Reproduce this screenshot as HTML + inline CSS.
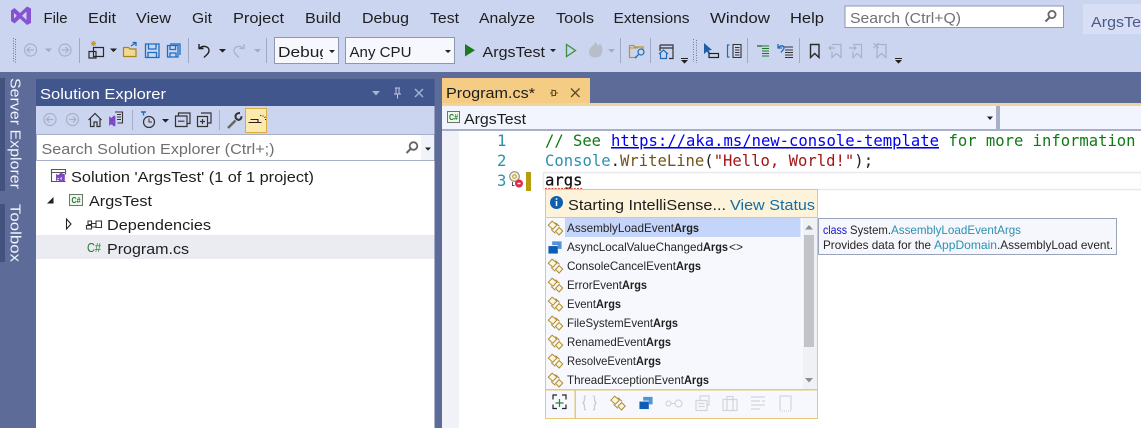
<!DOCTYPE html>
<html><head><meta charset="utf-8"><style>
html,body{margin:0;padding:0;width:1141px;height:428px;overflow:hidden;background:#5d6b99}
svg{display:block}
text{font-family:"Liberation Sans",sans-serif;font-size:15px;fill:#1e1e1e;white-space:pre}
.c text,text.c{font-family:"DejaVu Sans Mono","Liberation Mono",monospace;font-size:15.6px}
.l text{font-size:12px;fill:#252525}
.l text.b{font-weight:bold;fill:#1e1e1e}
.ic{fill:none;stroke-width:1.2}
</style></head><body>
<svg xmlns="http://www.w3.org/2000/svg" width="1141" height="428" viewBox="0 0 1141 428">
<defs>
<symbol id="ev" viewBox="0 0 16 16" overflow="visible"><g fill="#fbf5df" stroke="#b08a2c" stroke-width="1"><path d="M.8 5.200 4.600 1.200 9.400 5 5.400 9.200Z"/><path d="M8 11.400 11.600 7.600 15.200 11 11.600 15Z"/><path d="M8 2.600 12 6.400M3.600 9.400 7.800 13.400" fill="none"/></g></symbol>
<symbol id="st" viewBox="0 0 16 16" overflow="visible"><path d="M5 2h10v8H11V6H5Z" fill="#4f93d8"/><path d="M1 7h10v8H1Z" fill="#0e5cb4"/></symbol>
<symbol id="drop" viewBox="0 0 7 4" overflow="visible"><path d="M0 0h7L3.500 3.600Z"/></symbol>
</defs>

<!-- header -->
<rect width="1141" height="72" fill="#ccd5f0"/>
<path d="M11 10.500 14.500 8 20 13 27 6.500 31 8.500V23L27 25 20 18.500 14.500 23.500 11 21Z" fill="#8654d2"/><path d="M14 13v5.500L16.800 15.800ZM26.500 11.500v8.500L22 15.800Z" fill="#ccd5f0"/>
<text x="43.500" y="23" textLength="24" lengthAdjust="spacingAndGlyphs">File</text>
<text x="88" y="23" textLength="28" lengthAdjust="spacingAndGlyphs">Edit</text>
<text x="136" y="23" textLength="35" lengthAdjust="spacingAndGlyphs">View</text>
<text x="192" y="23" textLength="20" lengthAdjust="spacingAndGlyphs">Git</text>
<text x="233" y="23" textLength="51" lengthAdjust="spacingAndGlyphs">Project</text>
<text x="305" y="23" textLength="36" lengthAdjust="spacingAndGlyphs">Build</text>
<text x="362" y="23" textLength="47" lengthAdjust="spacingAndGlyphs">Debug</text>
<text x="430" y="23" textLength="29" lengthAdjust="spacingAndGlyphs">Test</text>
<text x="479" y="23" textLength="56" lengthAdjust="spacingAndGlyphs">Analyze</text>
<text x="556" y="23" textLength="38" lengthAdjust="spacingAndGlyphs">Tools</text>
<text x="613.500" y="23" textLength="76" lengthAdjust="spacingAndGlyphs">Extensions</text>
<text x="710" y="23" textLength="60" lengthAdjust="spacingAndGlyphs">Window</text>
<text x="790" y="23" textLength="34" lengthAdjust="spacingAndGlyphs">Help</text>
<rect x="845" y="6" width="218.500" height="21.500" fill="#fff" stroke="#8e96b0"/>
<text x="850" y="23" textLength="111" lengthAdjust="spacingAndGlyphs" style="fill:#717171">Search (Ctrl+Q)</text>
<circle cx="1052" cy="14.500" r="3.600" fill="none" stroke="#666" stroke-width="1.800"/><path d="M1049.500 17.500 1045.500 21.500" stroke="#666" stroke-width="2"/>
<rect x="1083" y="4" width="58" height="30" fill="#d8dff4"/>
<text x="1091" y="27" textLength="50" lengthAdjust="spacingAndGlyphs" style="fill:#4a5a8a">ArgsTe</text>

<!-- main toolbar -->
<path d="M13.500 38v24M15.500 39v24" stroke="#6f7791" stroke-width="1" stroke-dasharray="1 1.500"/>
<g class="ic" stroke="#a9b0c4"><circle cx="30.500" cy="50" r="6"/><path d="M34 50h-6.500M30 47l-3 3 3 3"/><circle cx="65" cy="50" r="6"/><path d="M61.500 50H68M65.500 47l3 3-3 3"/></g>
<use href="#drop" x="45" y="48.500" width="7" height="4" fill="#a4abc0"/>
<path d="M79.500 38v25M188.500 38v25M266.500 38v25M620.500 38v25M650.500 38v25M747.500 38v25M799.500 38v25" stroke="#9fa8c4"/>
<!-- new project -->
<path d="M91 43.500h5M93.500 41v5M91.500 41.500l4 4M95.500 41.500l-4 4" stroke="#c39a30"/>
<path d="M93.500 47.500h10v9h-10ZM89 51.500h7v6.500h-7Z" fill="none" stroke="#2a2a2a" stroke-width="1.200"/>
<use href="#drop" x="110" y="48.500" width="7" height="4" fill="#222"/>
<!-- open folder -->
<path d="M123.500 47.500h5l1.500 1.500h6v7.500h-12.500Z" fill="#f1d98f" stroke="#a8841e" stroke-width="1.200"/><path d="M131 46l4.500-3M132.500 42.500h3.500v3.500" fill="none" stroke="#1f6cb8" stroke-width="1.300"/>
<!-- save -->
<g fill="none" stroke="#1b6ec2" stroke-width="1.300"><path d="M145.500 44h13.500v13.500h-13.500ZM148.500 44v5h7.500v-5M148 57.500V52.500h8.500v5"/><path d="M167.500 45.500h10.500v11.500h-10.500ZM170 45.500v4h5.500v-4M170 57v-4h6v4M170 44h10v11"/></g>
<!-- undo redo -->
<path d="M199 44v4.500h4.500M199.500 48.500c3-3.500 10-2.500 9.500 2.500-.3 3-3 4-5 6.500" fill="none" stroke="#222" stroke-width="1.400"/>
<use href="#drop" x="219" y="49" width="7" height="4" fill="#222"/>
<path d="M244 44v4.500h-4.500M243.500 48.500c-3-3.500-10-2.500-9.500 2.500.3 3 3 4 5 6.500" fill="none" stroke="#aab1c6" stroke-width="1.300"/>
<use href="#drop" x="254" y="49" width="7" height="4" fill="#a4abc0"/>
<!-- combos -->
<rect x="274.500" y="37.500" width="64" height="26" fill="#f7f8fd" stroke="#8e96b0"/>
<clipPath id="dc"><rect x="274" y="37" width="49" height="22"/></clipPath>
<text x="278" y="57" textLength="51" lengthAdjust="spacingAndGlyphs" clip-path="url(#dc)">Debug</text>
<use href="#drop" x="329" y="50" width="6" height="3.500" fill="#222"/>
<rect x="345.500" y="37.500" width="109" height="26" fill="#f7f8fd" stroke="#8e96b0"/>
<text x="349.500" y="57" textLength="62" lengthAdjust="spacingAndGlyphs">Any CPU</text>
<use href="#drop" x="445" y="50" width="6" height="3.500" fill="#222"/>
<path d="M465 44v12.500l10-6.250Z" fill="#197a1e"/>
<text x="482.500" y="57" textLength="62.500" lengthAdjust="spacingAndGlyphs">ArgsTest</text>
<use href="#drop" x="550" y="49" width="6" height="3.500" fill="#222"/>
<path d="M566.500 44.500v12l9-6Z" fill="none" stroke="#3f8f45" stroke-width="1.300"/>
<path d="M589 52c0-5 5-6 6-10 3 1.500 2.500 4 2.500 4 1-.5 2-2 2.500-2.500 3.500 4 4 13-3.500 14-5 .5-7.500-2-7.500-5.500Z" fill="#b8bdcb"/>
<use href="#drop" x="608" y="49" width="7" height="4" fill="#a4abc0"/>
<!-- folder search -->
<path d="M629.500 45.500h4l1.500 1.500h8v3M637 57.500h-7.500v-12" fill="none" stroke="#b9962c" stroke-width="1.300"/><path d="M630 48h8" stroke="#b9962c"/>
<circle cx="641" cy="52" r="3" fill="none" stroke="#1f6cb8" stroke-width="1.200"/><path d="M638.500 54.500 635 58" stroke="#1f6cb8" stroke-width="1.300"/>
<!-- window home -->
<path d="M660 45h13v13.500h-4M660 51v-6M660 48h13" fill="none" stroke="#333" stroke-width="1.200"/>
<path d="M659 54l4.500-4 4.500 4M660.500 53.500v5h6v-5" fill="none" stroke="#1f6cb8" stroke-width="1.200"/>
<path d="M681 58.500h7" stroke="#222"/><use href="#drop" x="681" y="60" width="7" height="4" fill="#222"/>
<path d="M693.500 39v23M696.500 40v23" stroke="#6f7791" stroke-dasharray="1 1.500"/>
<path d="M704 43v11l3-2.500 2 3 1.500-1-2-3 3.500-.5Z" fill="#1c5fa8"/>
<rect x="709" y="53.500" width="9.500" height="4" fill="none" stroke="#222" stroke-width="1.200"/>
<path d="M729.500 45h-2v12h2" fill="none" stroke="#1f6cb8" stroke-width="1.200"/><path d="M733 44.500h8v13h-8ZM735 47.500h4.500M735 50h4.500M735 52.500h4.500M735 55h4.500" fill="none" stroke="#333" stroke-width="1.100"/>
<path d="M762 46h7M762 48.500h7M762 51h7M762 53.500h7M762 56h7" stroke="#1f7a26" stroke-width="1.100"/><path d="M757 46h5" stroke="#222"/>
<path d="M783 47h10M785 50h8M785 52.500h8M785 55h8M785 57.500h8" stroke="#333" stroke-width="1.100"/><path d="M778 44v4h4M778.500 47.500c2-2.500 5-2 5.500 0 .3 2-2 3-3 5" fill="none" stroke="#1f6cb8" stroke-width="1.300"/>
<path d="M810.500 44.500h8.500v13l-4.250-4-4.250 4Z" fill="none" stroke="#2a2a2a" stroke-width="1.400"/>
<g fill="none" stroke="#a9b0c4" stroke-width="1.200"><path d="M832 44.500h9v13l-4.500-4-4.500 4v-6M829 48h6M831 46l-2 2 2 2"/><path d="M853 44.500h8.500v13l-4.250-4-4.250 4v-6M849 48h7M854 46l2 2-2 2"/><path d="M877 44.500h9v13l-4.500-4-4.500 4ZM873.500 43l5 5M878.500 43l-5 5"/></g>
<path d="M895 58.500h7" stroke="#222"/><use href="#drop" x="895" y="60" width="7" height="4" fill="#222"/>

<!-- dock bg -->
<rect x="0" y="72" width="1141" height="356" fill="#5d6b99"/>
<rect x="0" y="78" width="5" height="113" fill="#43527f"/>
<rect x="0" y="204" width="5" height="58" fill="#43527f"/>
<text transform="translate(10.500,78) rotate(90)" textLength="111" lengthAdjust="spacingAndGlyphs" style="fill:#f2f4fb">Server Explorer</text>
<text transform="translate(10.500,204) rotate(90)" textLength="58" lengthAdjust="spacingAndGlyphs" style="fill:#f2f4fb">Toolbox</text>

<!-- solution explorer -->
<rect x="36" y="79" width="398.500" height="27" fill="#40568d"/>
<text x="40" y="99" textLength="126" lengthAdjust="spacingAndGlyphs" style="fill:#fff">Solution Explorer</text>
<path d="M372 91h8l-4 4.500Z" fill="#a8b4d6"/>
<path d="M395 88h5M396 88v6h3v-6M394 94h7M397.500 94v4.500" fill="none" stroke="#c0c9e4"/>
<path d="M415 89l8 8M423 89l-8 8" stroke="#a8b4d6" stroke-width="1.400"/>
<rect x="36" y="106" width="398.500" height="28" fill="#ccd5f0"/>
<g class="ic" stroke="#a9b0c4"><circle cx="50" cy="119.500" r="6"/><path d="M53.500 119.500h-7M49.500 116.500l-3 3 3 3"/><circle cx="72.500" cy="119.500" r="6"/><path d="M69 119.500h7M73 116.500l3 3-3 3"/></g>
<path d="M88.500 120l6.500-6.500 6.500 6.500M90.500 118.500v8h3.500v-4.500h3v4.500h3v-8" fill="none" stroke="#333" stroke-width="1.200"/>
<path d="M109.500 119v6l2-1.500 2.500 2.500 1-.5v-9l-1-.5-2.500 2.500-2-1.500Zm2 2v2l1.500-1Zm2.800-1v4l-1.500-2Z" fill="#7c48c6" stroke="#7c48c6" stroke-width=".8"/>
<path d="M115 112h7.500v11h-5M117 114.500h4M117 117h4M117 119.500h4" fill="none" stroke="#333" stroke-width="1.100"/>
<path d="M132.500 110v20M219.500 110v20" stroke="#a3accb"/>
<path d="M141 112h5M143.500 112v3.500" stroke="#1f6cb8" stroke-width="1.400"/>
<circle cx="149" cy="122" r="5.500" fill="none" stroke="#333" stroke-width="1.200"/><path d="M149 118.500v3.500h3" fill="none" stroke="#333"/>
<use href="#drop" x="162" y="119" width="7" height="4" fill="#222"/>
<path d="M175.500 116h11.500v10.500h-11.500ZM178.500 116v-3h11.500v10.500h-3M178 121.200h6.500" fill="none" stroke="#333" stroke-width="1.200"/>
<path d="M201 113h10v10h-4M197.500 116.500h10v10h-10ZM202.500 119v5M200 121.500h5" fill="none" stroke="#333" stroke-width="1.200"/>
<path d="M228 128l7.500-7.500" fill="none" stroke="#666" stroke-width="2.400"/><path d="M240 113c-3 0-4.500 1.500-4.500 3.500s2 4 4 3.200c1.500-.7 2-2 2-3.500" fill="none" stroke="#333" stroke-width="2"/>
<rect x="245.500" y="108.500" width="21" height="24" fill="#fbe9ad" stroke="#d9ad44"/>
<path d="M248.500 122.500h13M250.500 119.500h7.500v3M263 115.500v1M260.500 115l.5 1M265 119.500h1M264.500 117.500l1-.5" fill="none" stroke="#222" stroke-width="1.100"/>
<rect x="36.500" y="134.500" width="397.500" height="26" fill="#fff" stroke="#a8b0c8"/>
<rect x="421" y="135" width="13" height="25" fill="#f1f3fa"/>
<text x="41.500" y="154" textLength="233" lengthAdjust="spacingAndGlyphs" style="fill:#6f6f6f">Search Solution Explorer (Ctrl+;)</text>
<circle cx="413.500" cy="146" r="3.800" fill="none" stroke="#666" stroke-width="1.800"/><path d="M410.500 149 406.500 153" stroke="#666" stroke-width="2"/>
<use href="#drop" x="425" y="147.500" width="6" height="3.500" fill="#222"/>
<rect x="36" y="161" width="398.500" height="267" fill="#fff"/>
<rect x="36" y="235" width="398.500" height="24" fill="#ebecf1"/>
<path d="M65.500 181.500h-14v-12h14v5M52 172.500h13" fill="none" stroke="#555" stroke-width="1.100"/><path d="M56 176v5l2-1.200 2.800 2.400 4-1.500v-6.500l-4-1.500-2.800 2.400-2-1.200Zm1.600 1.400v2.200l1.400-1.100Zm4 -.8-1.400 1.900 1.400 1.900Z" fill="#7c48c6" fill-rule="evenodd"/>
<text x="71" y="182" textLength="243" lengthAdjust="spacingAndGlyphs">Solution 'ArgsTest' (1 of 1 project)</text>
<path d="M47 203.500h6.500v-6.500Z" fill="#222"/>
<rect x="69.500" y="194.500" width="13" height="11" fill="#eef6ee" stroke="#66786a"/><text x="71.500" y="203" style="font-size:8.500px;font-weight:bold;fill:#1f7a26" textLength="9" lengthAdjust="spacingAndGlyphs">C#</text>
<text x="89" y="206" textLength="63" lengthAdjust="spacingAndGlyphs">ArgsTest</text>
<path d="M66.500 219v10l4.500-5Z" fill="none" stroke="#222" stroke-width="1.100"/>
<path d="M88 221h3.500v3.500H88ZM86.500 225.500h5v3.500h-5ZM96 221h5.500v6.500H96ZM91.500 223.500h4.500M91.500 227h4.500" fill="none" stroke="#333" stroke-width="1.100"/>
<text x="107" y="230" textLength="104" lengthAdjust="spacingAndGlyphs">Dependencies</text>
<text x="87" y="252" textLength="14" lengthAdjust="spacingAndGlyphs" style="font-size:13px;fill:#1f7a26">C#</text>
<text x="107" y="254" textLength="82" lengthAdjust="spacingAndGlyphs">Program.cs</text>

<!-- doc tab -->
<rect x="442" y="78" width="148" height="26" fill="#f5cc84"/>
<rect x="442" y="103" width="699" height="3" fill="#f0d59a"/>
<text x="446" y="98" textLength="89" lengthAdjust="spacingAndGlyphs">Program.cs*</text>
<path d="M550 93h2M552 90.500v5h3.500v-5ZM555.500 93h2.500M552 89.500v7" fill="none" stroke="#5e4a20" stroke-width="1.100"/>
<path d="M571 88.500l8.500 8.500M579.500 88.500 571 97" stroke="#5e4a20" stroke-width="1.300"/>

<!-- nav bar -->
<rect x="442" y="106" width="699" height="24" fill="#f2f5fd"/>
<rect x="442" y="129" width="699" height="2" fill="#a8b0c8"/>
<rect x="996" y="106" width="4" height="24" fill="#a8b0c8"/>
<rect x="447.500" y="111.500" width="12" height="11" fill="#eef6ee" stroke="#66786a"/><text x="449" y="120" style="font-size:8.500px;font-weight:bold;fill:#1f7a26" textLength="9" lengthAdjust="spacingAndGlyphs">C#</text>
<text x="464" y="124" textLength="62" lengthAdjust="spacingAndGlyphs">ArgsTest</text>
<path d="M987 116.500h6l-3 3.500Z" fill="#222"/>

<!-- editor -->
<rect x="442" y="131" width="699" height="297" fill="#fff"/>
<rect x="442" y="131" width="17" height="297" fill="#f1f2f8"/>
<rect x="543.500" y="172.500" width="598" height="17" fill="none" stroke="#e8e8ee" stroke-width="1.500"/>
<g class="c">
<text x="497" y="146" style="fill:#2b91af" textLength="9.400">1</text>
<text x="497" y="166" style="fill:#2b91af" textLength="9.400">2</text>
<text x="497" y="186" style="fill:#2b91af" textLength="9.400">3</text>
<text x="545" y="146" style="fill:#0f7a14" textLength="56" lengthAdjust="spacingAndGlyphs">// See</text>
<text x="611" y="146" style="fill:#0000ee" text-decoration="underline" textLength="328" lengthAdjust="spacingAndGlyphs">https://aka.ms/new-console-template</text>
<text x="948.500" y="146" style="fill:#0f7a14" textLength="187" lengthAdjust="spacingAndGlyphs">for more information</text>
<text x="545" y="166" style="fill:#2b91af" textLength="65.600" lengthAdjust="spacingAndGlyphs">Console</text>
<text x="610.600" y="166" style="fill:#222" textLength="9.400">.</text>
<text x="620" y="166" style="fill:#74531f" textLength="84.300" lengthAdjust="spacingAndGlyphs">WriteLine</text>
<text x="704.300" y="166" style="fill:#222" textLength="9.400">(</text>
<text x="713.700" y="166" style="fill:#a31515" textLength="140.600" lengthAdjust="spacingAndGlyphs">"Hello, World!"</text>
<text x="854.300" y="166" style="fill:#222" textLength="18.800" lengthAdjust="spacingAndGlyphs">);</text>
<text x="545" y="185.500" style="fill:#111;stroke:#111;stroke-width:.25" textLength="37.500" lengthAdjust="spacingAndGlyphs">args</text>
</g>
<path d="M545 188.500h38" stroke="#e5533a" stroke-width="1.200" stroke-dasharray="2 1.200"/>
<circle cx="514.500" cy="176.500" r="4.800" fill="#f8f1d8" stroke="#8f8f78" stroke-width="1.100"/><circle cx="514.500" cy="176.500" r="1.800" fill="none" stroke="#b39a35"/><path d="M512.500 182v3.500h2" fill="none" stroke="#555"/>
<circle cx="519" cy="183.500" r="4" fill="#d9304a"/><path d="M517.500 183.500h3" stroke="#fff" stroke-width="1.400"/>
<rect x="526" y="172" width="5" height="19" fill="#b59f0e"/>

<!-- completion popup -->
<rect x="545.500" y="189.500" width="272" height="229" fill="#f6f8fd" stroke="#e5c878"/>
<rect x="546" y="190" width="271" height="27" fill="#fdf3da"/>
<rect x="546" y="217" width="271" height="1" fill="#e5c878"/>
<circle cx="556.500" cy="202.500" r="6.500" fill="#0f5fae"/><path d="M556.500 201v5" stroke="#fff" stroke-width="1.500"/><path d="M556.500 198.200v1.600" stroke="#fff" stroke-width="1.500"/>
<text x="568" y="210" textLength="158" lengthAdjust="spacingAndGlyphs">Starting IntelliSense...</text>
<text x="730" y="210" textLength="85" lengthAdjust="spacingAndGlyphs" style="fill:#106ea8">View Status</text>
<rect x="565" y="218" width="235.500" height="19" fill="#c5d5fa"/>
<use href="#ev" x="547.500" y="220" width="16" height="16"/>
<use href="#st" x="547.500" y="239.500" width="15" height="15"/>
<use href="#ev" x="547.500" y="258" width="16" height="16"/>
<use href="#ev" x="547.500" y="277" width="16" height="16"/>
<use href="#ev" x="547.500" y="296" width="16" height="16"/>
<use href="#ev" x="547.500" y="315" width="16" height="16"/>
<use href="#ev" x="547.500" y="334" width="16" height="16"/>
<use href="#ev" x="547.500" y="353" width="16" height="16"/>
<use href="#ev" x="547.500" y="372" width="16" height="16"/>
<g class="l">
<text x="567" y="232" textLength="107" lengthAdjust="spacingAndGlyphs">AssemblyLoadEvent</text><text class="b" x="674" y="232" textLength="25" lengthAdjust="spacingAndGlyphs">Args</text>
<text x="567" y="251" textLength="136" lengthAdjust="spacingAndGlyphs">AsyncLocalValueChanged</text><text class="b" x="703" y="251" textLength="25" lengthAdjust="spacingAndGlyphs">Args</text><text x="729" y="251" textLength="14" lengthAdjust="spacingAndGlyphs">&lt;&gt;</text>
<text x="567" y="270" textLength="109" lengthAdjust="spacingAndGlyphs">ConsoleCancelEvent</text><text class="b" x="676" y="270" textLength="25" lengthAdjust="spacingAndGlyphs">Args</text>
<text x="567" y="289" textLength="55" lengthAdjust="spacingAndGlyphs">ErrorEvent</text><text class="b" x="622" y="289" textLength="25" lengthAdjust="spacingAndGlyphs">Args</text>
<text x="567" y="308" textLength="29" lengthAdjust="spacingAndGlyphs">Event</text><text class="b" x="596" y="308" textLength="25" lengthAdjust="spacingAndGlyphs">Args</text>
<text x="567" y="327" textLength="86" lengthAdjust="spacingAndGlyphs">FileSystemEvent</text><text class="b" x="653" y="327" textLength="25" lengthAdjust="spacingAndGlyphs">Args</text>
<text x="567" y="346" textLength="79" lengthAdjust="spacingAndGlyphs">RenamedEvent</text><text class="b" x="646" y="346" textLength="25" lengthAdjust="spacingAndGlyphs">Args</text>
<text x="567" y="365" textLength="69" lengthAdjust="spacingAndGlyphs">ResolveEvent</text><text class="b" x="636" y="365" textLength="25" lengthAdjust="spacingAndGlyphs">Args</text>
<text x="567" y="384" textLength="117" lengthAdjust="spacingAndGlyphs">ThreadExceptionEvent</text><text class="b" x="684" y="384" textLength="25" lengthAdjust="spacingAndGlyphs">Args</text>
</g>
<rect x="803" y="218" width="14" height="171" fill="#f0f1f5"/>
<rect x="804" y="235" width="10" height="112" fill="#c2c3c9"/>
<path d="M805 229.500h8l-4-4.500Z" fill="#8d8d95"/>
<path d="M805 378h8l-4 4.500Z" fill="#8d8d95"/>
<rect x="546" y="389" width="271" height="1.500" fill="#e5c878"/>
<rect x="574.500" y="390" width="1.500" height="28" fill="#e5c878"/>
<path d="M553 399.500V395h4M562 395h4v4.500M566 404.500v4h-4M557 408.500h-4v-4" fill="none" stroke="#222" stroke-width="1.200"/><path d="M559.500 399v8M555.500 403h8" stroke="#1f8a3a" stroke-width="1.200"/>
<path d="M586 396c-2 0-1.500 2-1.500 3.500 0 2-1 3-1.500 3.500.5.500 1.500 1.500 1.500 3.500 0 1.500-.5 3.500 1.500 3.500M593 396c2 0 1.500 2 1.500 3.500 0 2 1 3 1.500 3.500-.5.500-1.500 1.500-1.500 3.500 0 1.500.5 3.500-1.500 3.500" fill="none" stroke="#c9ccd5" stroke-width="1.300"/>
<use href="#ev" x="610" y="395" width="16" height="16"/>
<use href="#st" x="638.500" y="395" width="15" height="15"/>
<g fill="none" stroke="#d2d5dd" stroke-width="1.200">
<circle cx="668.500" cy="403.500" r="2.500"/><circle cx="678.500" cy="403.500" r="3.500"/><path d="M671 403.500h4"/>
<path d="M696 400.500h11v10h-11ZM700 400v-4h9v9h-2M698.500 403.500h6M698.500 406.500h6"/>
<path d="M723 399.500h14v11h-14ZM727 399.500v-3h6v3M727 400v10M733 400v10"/>
<path d="M751 397h14M751 401h9M762 401h3M751 405h14M751 409h9"/>
<path d="M780 410v-14h11v14"/><path d="M780 411h11" stroke-dasharray="1 1"/>
</g>

<!-- tooltip -->
<rect x="818.500" y="218.500" width="298" height="36" fill="#f5f7fc" stroke="#9aa3b8"/>
<g class="l">
<text x="823" y="234" textLength="24" lengthAdjust="spacingAndGlyphs" style="fill:#1212c8">class</text>
<text x="850" y="234" textLength="41" lengthAdjust="spacingAndGlyphs">System.</text>
<text x="891" y="234" textLength="130" lengthAdjust="spacingAndGlyphs" style="fill:#2b91af">AssemblyLoadEventArgs</text>
<text x="823" y="249" textLength="108" lengthAdjust="spacingAndGlyphs">Provides data for the</text>
<text x="934" y="249" textLength="63" lengthAdjust="spacingAndGlyphs" style="fill:#2b91af">AppDomain</text>
<text x="997" y="249" textLength="116" lengthAdjust="spacingAndGlyphs">.AssemblyLoad event.</text>
</g>
</svg>
</body></html>
